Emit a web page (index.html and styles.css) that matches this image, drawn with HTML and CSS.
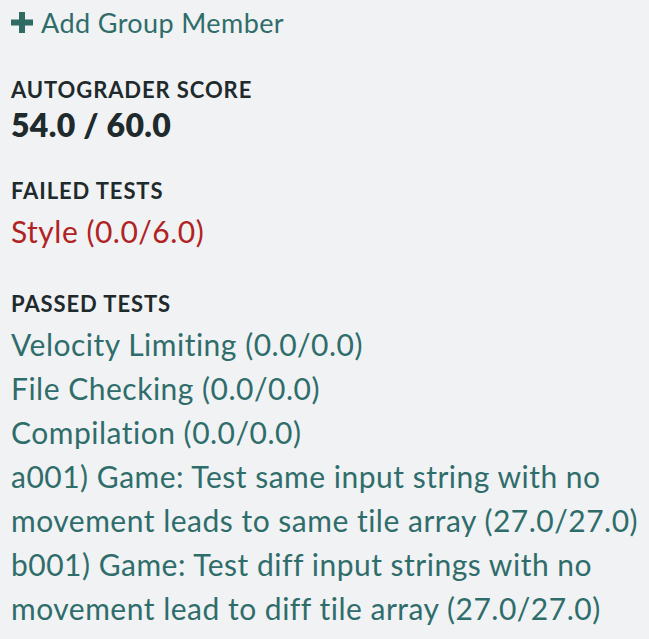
FILE: index.html
```html
<!DOCTYPE html>
<html lang="en">
<head>
<meta charset="utf-8">
<title>Autograder Results</title>
<link rel="stylesheet" href="styles.css">
</head>
<body>
<div class="sidebar">
  <a class="add-member" href="#">
    <svg class="plus" viewBox="0 0 22 21" width="22" height="21" aria-hidden="true"><path d="M8 0h6v7.5h8v6h-8V21H8v-7.5H0v-6h8z"/></svg>
    <span>Add Group Member</span>
  </a>
  <section class="block">
    <h3 class="label">AUTOGRADER SCORE</h3>
    <div class="score">54.0 / 60.0</div>
  </section>
  <section class="block">
    <h3 class="label">FAILED TESTS</h3>
    <ul class="tests failed">
      <li>Style (0.0/6.0)</li>
    </ul>
  </section>
  <section class="block block-passed">
    <h3 class="label">PASSED TESTS</h3>
    <ul class="tests passed">
      <li>Velocity Limiting (0.0/0.0)</li>
      <li>File Checking (0.0/0.0)</li>
      <li>Compilation (0.0/0.0)</li>
      <li>a001) Game: Test same input string with no movement leads to same tile array (27.0/27.0)</li>
      <li>b001) Game: Test diff input strings with no movement lead to diff tile array (27.0/27.0)</li>
    </ul>
  </section>
</div>
</body>
</html>
```
FILE: styles.css
```css
html, body {
  margin: 0;
  padding: 0;
  background: #f1f2f4;
}
body {
  font-family: "Lato", "Liberation Sans", sans-serif;
}
.sidebar {
  padding: 0 4px 0 11px;
}
.add-member {
  display: flex;
  align-items: center;
  gap: 8px;
  height: 44px;
  font-size: 27px;
  letter-spacing: 0.4px;
  color: #2f6d6b;
  text-decoration: none;
}
.plus {
  fill: #2e6b62;
  flex: none;
}
.block {
  margin-top: 31px;
}
.block-passed {
  margin-top: 36px;
}
.label {
  margin: 0;
  font-size: 22px;
  line-height: 30px;
  font-weight: 700;
  letter-spacing: 0.9px;
  color: #1f2a2c;
}
.score {
  font-size: 32px;
  line-height: 40px;
  font-weight: 800;
  letter-spacing: 0.3px;
  color: #1f2a2c;
}
.tests {
  list-style: none;
  margin: 3px 0 0;
  padding: 0;
  font-size: 30px;
  line-height: 44px;
  letter-spacing: 0.5px;
}
.failed { color: #b02323; }
.passed { color: #2f6d6b; }
```
